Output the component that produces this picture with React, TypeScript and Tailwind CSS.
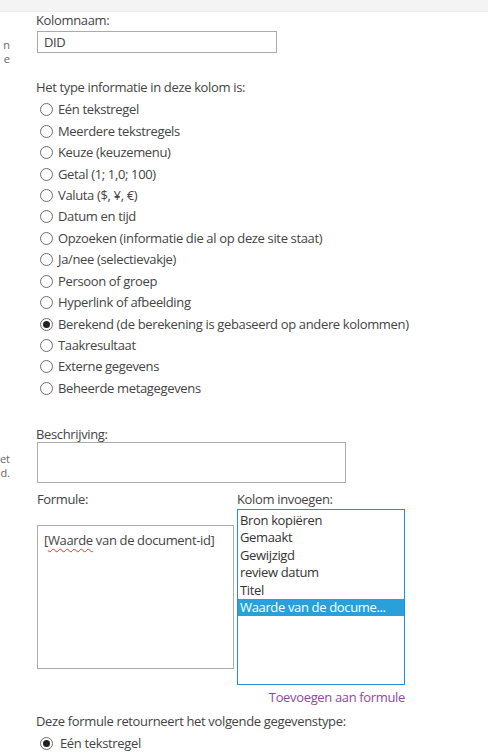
import React from "react";

const types = [
  "Eén tekstregel",
  "Meerdere tekstregels",
  "Keuze (keuzemenu)",
  "Getal (1; 1,0; 100)",
  "Valuta ($, ¥, €)",
  "Datum en tijd",
  "Opzoeken (informatie die al op deze site staat)",
  "Ja/nee (selectievakje)",
  "Persoon of groep",
  "Hyperlink of afbeelding",
  "Berekend (de berekening is gebaseerd op andere kolommen)",
  "Taakresultaat",
  "Externe gegevens",
  "Beheerde metagegevens",
];

const cols = ["Bron kopiëren", "Gemaakt", "Gewijzigd", "review datum", "Titel"];

function Radio({ checked }: { checked?: boolean }) {
  return (
    <span className="flex h-[13px] w-[13px] shrink-0 items-center justify-center rounded-full border border-[#6d6d6d] bg-white">
      {checked && <span className="h-[7px] w-[7px] rounded-full bg-[#222]" />}
    </span>
  );
}

export default function App() {
  return (
    <div
      className="relative h-[753px] w-[488px] overflow-hidden bg-white text-[13px] tracking-[-0.35px] text-[#444]"
      style={{ fontFamily: '"Open Sans", "Noto Sans", sans-serif' }}
    >
      <div className="h-[12px] border-b border-[#ececec] bg-[#f4f4f4]" />
      <div className="flex">
        <div className="relative w-[36px] shrink-0 text-[11px] tracking-normal text-[#666]">
          <div className="absolute left-0 top-[26px] flex w-[10px] flex-col items-end leading-[14px]">
            <span>n</span>
            <span>e</span>
          </div>
          <div className="absolute left-0 top-[440px] flex w-[10px] flex-col items-end leading-[14px]">
            <span>et</span>
            <span>d.</span>
          </div>
        </div>
        <div className="flex w-[452px] flex-col">
          <div className="mt-[-1px] leading-[18px]">Kolomnaam:</div>
          <div className="ml-[1px] mt-[2px] flex h-[22px] w-[240px] items-center border border-[#ababab] px-[6px] leading-none">
            DID
          </div>
          <div className="mt-[25px] leading-[18px]">Het type informatie in deze kolom is:</div>
          <div className="mt-[3px] flex flex-col">
            {types.map((t, i) => (
              <div key={t} className="flex h-[21.45px] items-center gap-[5px] pl-[4px]">
                <Radio checked={i === 10} />
                <span className="whitespace-nowrap leading-none">{t}</span>
              </div>
            ))}
          </div>
          <div className="mt-[26px] leading-[18px]">Beschrijving:</div>
          <div className="ml-[1px] mt-[-1px] h-[41px] w-[309px] border border-[#ababab]" />
          <div className="mt-[7px] flex">
            <div className="flex w-[200px] flex-col">
              <div className="ml-[1px] leading-[18px]">Formule:</div>
              <div className="ml-[1px] mt-[17px] h-[144px] w-[197px] border border-[#ababab] px-[6px] py-[5px] leading-[18px]">
                [
                <span className="underline decoration-[#e0392c] decoration-wavy decoration-1 underline-offset-[3px]">Waarde</span>{" "}
                van de document-id]
              </div>
            </div>
            <div className="ml-[1px] flex flex-col">
              <div className="leading-[18px]">Kolom invoegen:</div>
              <div className="mt-[1px] flex h-[176px] w-[168px] flex-col border border-[#2a8dd4] pt-[2px]">
                {cols.map((c) => (
                  <div key={c} className="flex h-[17.4px] items-center whitespace-nowrap pl-[2px] text-[#333]">
                    {c}
                  </div>
                ))}
                <div className="flex h-[17.4px] items-center whitespace-nowrap bg-[#2aa0da] pl-[2px] text-white">
                  Waarde van de docume...
                </div>
              </div>
              <div className="mt-[3px] text-right leading-[18px] text-[#8e4b9d]">Toevoegen aan formule</div>
            </div>
          </div>
          <div className="mt-[6px] leading-[18px]">Deze formule retourneert het volgende gegevenstype:</div>
          <div className="mt-[3px] flex h-[21px] items-center gap-[7px] pl-[4px]">
            <Radio checked />
            <span className="leading-none">Eén tekstregel</span>
          </div>
        </div>
      </div>
    </div>
  );
}
